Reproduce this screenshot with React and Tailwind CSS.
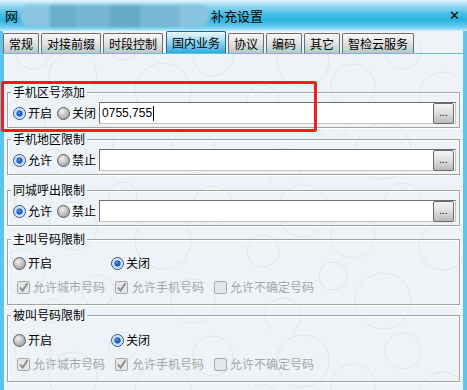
import React from 'react';

const FONT = "font-['Microsoft_YaHei','Noto_Sans_CJK_SC','Noto_Sans',sans-serif]";

function Radio({ checked }) {
  return checked ? (
    <svg width="13" height="13" viewBox="0 0 13 13" className="shrink-0">
      <circle cx="6.5" cy="6.5" r="6" fill="#fff" stroke="#2b4d86" />
      <circle cx="6.5" cy="6.5" r="4.6" fill="none" stroke="#9ec3ec" strokeWidth="1" />
      <circle cx="6.5" cy="6.5" r="3.2" fill="#1f5fbf" />
      <circle cx="6" cy="5.8" r="1.4" fill="#4f8fe6" />
    </svg>
  ) : (
    <svg width="13" height="13" viewBox="0 0 13 13" className="shrink-0">
      <defs>
        <radialGradient id="rg" cx="0.4" cy="0.35" r="0.7">
          <stop offset="0" stopColor="#f2f2f2" />
          <stop offset="1" stopColor="#9a9a9a" />
        </radialGradient>
      </defs>
      <circle cx="6.5" cy="6.5" r="6" fill="url(#rg)" stroke="#5e5e5e" />
    </svg>
  );
}

function Check({ checked }) {
  return (
    <svg width="13" height="13" viewBox="0 0 13 13" className="shrink-0">
      <rect x="0.5" y="0.5" width="12" height="12" rx="1.5" fill="#e4e6e8" stroke="#a9a9a9" />
      {checked && <path d="M3 6.5 L5.6 9.6 L10.5 2.2" fill="none" stroke="#8c8c8c" strokeWidth="1.9" />}
    </svg>
  );
}

function Dots() {
  return (
    <button className="w-[21px] h-[21px] shrink-0 rounded-[2px] border border-[#6a6a6a] bg-gradient-to-b from-[#f6f6f6] via-[#dedede] to-[#b9b9b9] text-[10px] leading-none text-black flex items-end justify-center pb-[5px] font-['Liberation_Sans',sans-serif]">
      ...
    </button>
  );
}

function Group({ title, className = '', children }) {
  return (
    <fieldset className={`mx-[3px] border border-[#a3a39c] shadow-[inset_1px_1px_0_#fff,1px_1px_0_#fff] px-0 ${className}`}>
      <legend className="ml-[3px] px-[2px] text-[12px] leading-[14px] text-black">{title}</legend>
      {children}
    </fieldset>
  );
}

function InputRow({ a, b, value }) {
  return (
    <div className="flex items-center h-[22px] mt-[3px] mb-[3px] pl-[5px] pr-[3px]">
      <Radio checked />
      <span className="ml-[2px] mr-[5px]">{a}</span>
      <Radio />
      <span className="ml-[2px] mr-[3px]">{b}</span>
      <div className="flex-1 h-[22px] bg-white border border-[#6e6e6e] border-r-[#c4c4c4] border-b-[#c4c4c4] flex items-center justify-between pl-[2px] pr-[1px]">
        <span className="font-['Liberation_Sans',sans-serif] text-[12px] leading-none flex items-center">
          {value}
          {value && <span className="inline-block w-[1px] h-[15px] bg-black ml-[1px]" />}
        </span>
        <Dots />
      </div>
    </div>
  );
}

function RestrictBody({ top = 'mt-[9px]' }) {
  return (
    <div className="pl-[5px] pb-[9px]">
      <div className={`flex items-center h-[16px] ${top}`}>
        <Radio />
        <span className="ml-[2px] w-[83px]">开启</span>
        <Radio checked />
        <span className="ml-[2px]">关闭</span>
      </div>
      <div className="flex items-center h-[16px] mt-[8px] pl-[4px] text-[#a6a6a6]">
        <Check checked />
        <span className="ml-[3px] w-[82px]">允许城市号码</span>
        <Check checked />
        <span className="ml-[4px] w-[82px]">允许手机号码</span>
        <Check />
        <span className="ml-[3px]">允许不确定号码</span>
      </div>
    </div>
  );
}

const tabs = ['常规', '对接前缀', '时段控制', '国内业务', '协议', '编码', '其它', '智检云服务'];

function Bubbles() {
  const circles = [
    [30, 20, 18], [70, 45, 24], [120, 15, 14], [160, 60, 28], [210, 25, 20], [260, 70, 16],
    [300, 30, 26], [350, 55, 22], [400, 20, 18], [440, 65, 24], [20, 90, 22], [95, 110, 16],
    [190, 120, 22], [280, 135, 18], [380, 120, 28], [50, 130, 12], [330, 95, 14],
  ];
  return (
    <svg className="absolute inset-0 w-full h-full pointer-events-none" aria-hidden>
      <defs>
        <pattern id="bub" width="460" height="150" patternUnits="userSpaceOnUse">
          {circles.map(([x, y, r], i) => (
            <circle key={i} cx={x} cy={y} r={r} fill="none" stroke="#e0e4e9" strokeWidth="1" />
          ))}
        </pattern>
      </defs>
      <rect width="100%" height="100%" fill="url(#bub)" />
    </svg>
  );
}

export default function App() {
  return (
    <div className={`w-[467px] h-[390px] overflow-hidden flex flex-col bg-[#5ec4ec] text-[12px] text-black ${FONT}`}>
      {/* title bar */}
      <div className="h-[31px] shrink-0 flex items-center pl-[5px] pr-[7px] bg-[linear-gradient(to_bottom,#e4f5fb_0%,#a6def3_15%,#45bfe7_45%,#2cb3e1_65%,#70cdef_88%,#c7ecf9_100%)]">
        <span className="text-[13px] leading-none">网</span>
        <div className="ml-[2px] w-[190px] h-[22px] rounded-full bg-[#79bcd8] blur-[1.5px] flex overflow-hidden">
          <div className="w-[30px] bg-[#8ac6df]" />
          <div className="w-[25px] bg-[#6aaecb]" />
          <div className="w-[35px] bg-[#74b6d2]" />
          <div className="w-[30px] bg-[#64a9c6]" />
          <div className="w-[40px] bg-[#7ab9d5]" />
          <div className="flex-1 bg-[#88c4de]" />
        </div>
        <span className="ml-[1px] text-[13px] leading-none">补充设置</span>
        <span className="ml-auto font-['DejaVu_Sans',sans-serif] font-bold text-[13px] leading-none">✕</span>
      </div>

      {/* body */}
      <div className="relative flex-1 flex flex-col ml-[3px] mr-[4px] bg-[#eef3f8]">
        <Bubbles />
        <div className="relative h-[22px] flex items-end gap-[2px]">
          {tabs.map((t) =>
            t === '国内业务' ? (
              <div
                key={t}
                className="h-[22px] px-[5px] ml-[1px] flex items-center border border-b-0 border-[#2f5f9e] rounded-t-[2px] bg-gradient-to-b from-[#eaf8fd] via-[#8fd5f1] to-[#22abdd] leading-none"
              >
                {t}
              </div>
            ) : (
              <div
                key={t}
                className="h-[20px] px-[5px] flex items-center border border-b-0 border-[#6f6f6f] rounded-t-[2px] bg-gradient-to-b from-[#f7f7f7] via-[#e2e2e2] to-[#c2c2c2] leading-none"
              >
                {t}
              </div>
            )
          )}
        </div>
        <div className="relative flex-1 border-t border-l border-[#62c0e6] pt-[31px] flex flex-col">
          <div className="relative">
            <Group title="手机区号添加">
              <InputRow a="开启" b="关闭" value="0755,755" />
            </Group>
            <div className="absolute left-[-3px] top-[-4px] w-[316px] h-[51px] border-[3px] border-[#f41d1d] rounded-[2px]" />
          </div>
          <Group title="手机地区限制" className="mt-[4px]">
            <InputRow a="允许" b="禁止" value="" />
          </Group>
          <Group title="同城呼出限制" className="mt-[8px]">
            <InputRow a="允许" b="禁止" value="" />
          </Group>
          <Group title="主叫号码限制" className="mt-[6px]">
            <RestrictBody />
          </Group>
          <Group title="被叫号码限制" className="mt-[3px]">
            <RestrictBody top="mt-[10px]" />
          </Group>
        </div>
      </div>
    </div>
  );
}
